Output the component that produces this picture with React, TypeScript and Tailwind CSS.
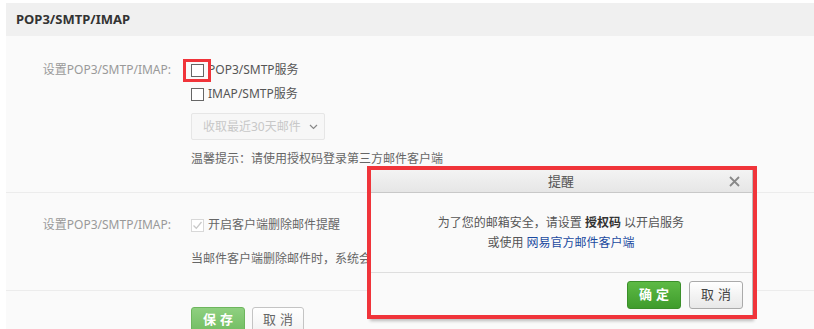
import React from "react";

const font = { fontFamily: '"Noto Sans", "Noto Sans CJK SC", sans-serif' };

function Box({ checked = false, disabled = false }: { checked?: boolean; disabled?: boolean }) {
  return (
    <span
      className={
        "inline-flex items-center justify-center w-[13px] h-[13px] border bg-white shrink-0 " +
        (disabled ? "border-[#d8d8d8]" : "border-[#666]")
      }
    >
      {checked && (
        <svg width="11" height="11" viewBox="0 0 11 11">
          <polyline points="1.5,5.5 4.3,8.3 9.5,2" fill="none" stroke="#c8c8c8" strokeWidth="1.3" />
        </svg>
      )}
    </span>
  );
}

export default function App() {
  return (
    <div className="relative w-[814px] h-[329px] overflow-hidden bg-white pt-[3px] pl-[6px] text-[12px]" style={font}>
      <div className="bg-[#fafafa] h-full">
        <div className="h-[33px] bg-[#f0f0f0] flex items-center pl-[10px] font-bold text-[#333] text-[13px]">
          POP3/SMTP/IMAP
        </div>

        {/* Row 1 */}
        <div className="flex pt-[22px] pb-[21px] border-b border-[#ececec]">
          <div className="w-[165px] text-right text-[#999] leading-[24px]">设置POP3/SMTP/IMAP:</div>
          <div className="ml-[20px] flex flex-col">
            <div className="flex items-center h-[24px] gap-[4px] text-[#555]">
              <Box />
              <span>POP3/SMTP服务</span>
            </div>
            <div className="flex items-center h-[24px] gap-[4px] text-[#555]">
              <Box />
              <span>IMAP/SMTP服务</span>
            </div>
            <div className="mt-[7px] w-[134px] h-[27px] border border-[#e6e6e6] bg-[#f7f7f7] rounded-[2px] flex items-center pl-[11px] gap-[8px] text-[#c8c8c8]">
              <span>收取最近30天邮件</span>
              <svg width="9" height="6" viewBox="0 0 9 6">
                <polyline points="1,1 4.5,4.5 8,1" fill="none" stroke="#888" strokeWidth="1.2" />
              </svg>
            </div>
            <div className="mt-[7px] leading-[24px] text-[#666]">温馨提示：请使用授权码登录第三方邮件客户端</div>
          </div>
        </div>

        {/* Row 2 */}
        <div className="flex pt-[20px] pb-[19px] border-b border-[#ececec]">
          <div className="w-[165px] text-right text-[#999] leading-[24px]">设置POP3/SMTP/IMAP:</div>
          <div className="ml-[20px] flex flex-col">
            <div className="flex items-center h-[24px] gap-[4px] text-[#666]">
              <Box checked disabled />
              <span>开启客户端删除邮件提醒</span>
            </div>
            <div className="mt-[10px] leading-[24px] text-[#666] whitespace-nowrap">当邮件客户端删除邮件时，系统会以邮件形式提醒</div>
          </div>
        </div>

        {/* Buttons */}
        <div className="flex pt-[16px] pl-[185px] gap-[7px]">
          <button className="w-[54px] h-[26px] rounded-[3px] border border-[#6db65d] bg-gradient-to-b from-[#8fd080] to-[#72bd62] text-white text-[13px] tracking-[4px] pl-[4px] font-bold">
            保存
          </button>
          <button className="w-[52px] h-[26px] rounded-[3px] border border-[#c4c4c4] bg-gradient-to-b from-white to-[#f2f2f2] text-[#666] text-[13px] tracking-[4px] pl-[4px]">
            取消
          </button>
        </div>
      </div>

      {/* Red annotation around checkbox */}
      <div className="absolute left-[183px] top-[59px] w-[28px] h-[23px] border-[3px] border-[#f0343a]" />

      {/* Dialog */}
      <div className="absolute left-[369px] top-[168px] w-[384px] h-[151px] bg-[#fafafa] border border-[#bbb] shadow-[1px_2px_3px_rgba(0,0,0,0.25)] flex flex-col">
        <div className="h-[24px] shrink-0 bg-gradient-to-b from-[#f4f4f4] to-[#e6e6e6] border-b border-[#c8c8c8] flex items-center justify-center relative text-[#555] text-[13px]">
          <span className="pt-[2px]">提醒</span>
          <svg className="absolute right-[12px] top-[7px]" width="11" height="11" viewBox="0 0 11 11">
            <path d="M1 1 L10 10 M10 1 L1 10" stroke="#888" strokeWidth="1.8" />
          </svg>
        </div>
        <div className="pt-[20px] pb-[19px] border-b border-[#dedede] text-center leading-[20px] text-[#555]">
          <div>
            为了您的邮箱安全，请设置 <span className="font-bold text-[#333]">授权码</span> 以开启服务
          </div>
          <div>
            或使用 <span className="text-[#1a4aa0]">网易官方邮件客户端</span>
          </div>
        </div>
        <div className="flex justify-end gap-[8px] pt-[8px] pr-[9px]">
          <button className="w-[54px] h-[28px] rounded-[3px] border border-[#3b8f2a] bg-gradient-to-b from-[#5dba45] to-[#3f9c2c] text-white text-[13px] font-bold tracking-[4px] pl-[4px]">
            确定
          </button>
          <button className="w-[54px] h-[28px] rounded-[3px] border border-[#aaa] bg-gradient-to-b from-white to-[#e8e8e8] text-[#444] text-[13px] tracking-[4px] pl-[4px]">
            取消
          </button>
        </div>
      </div>

      {/* Red annotation around dialog */}
      <div className="absolute left-[367px] top-[166px] w-[390px] h-[153px] border-[4px] border-[#f0343a]" />
    </div>
  );
}
